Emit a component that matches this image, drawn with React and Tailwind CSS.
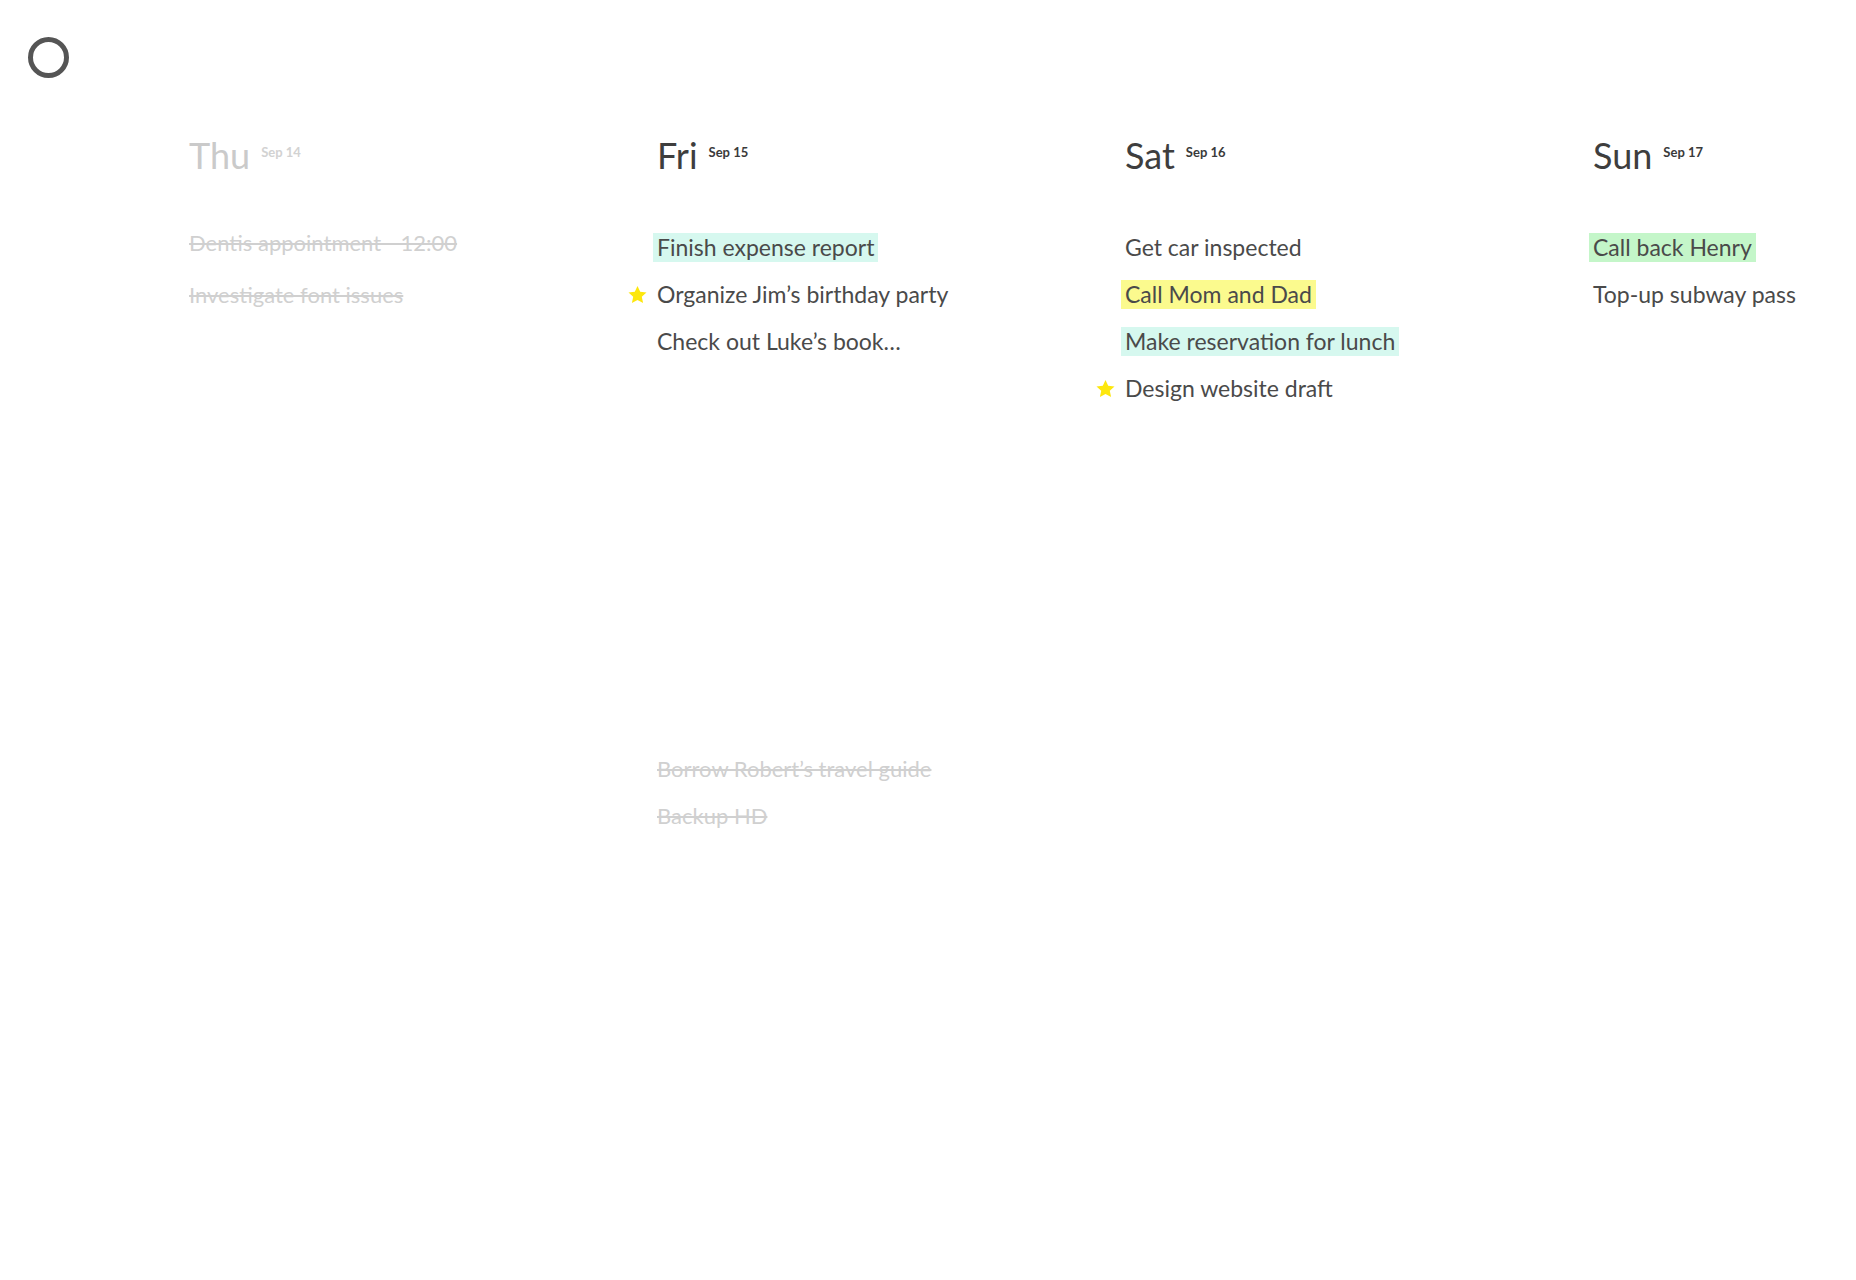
import React from "react";

const Star = () => (
  <svg viewBox="0 0 24 24" className="absolute left-[-30px] top-1/2 -translate-y-1/2 w-[21px] h-[21px]">
    <path d="M12 1.8l3.1 6.6 7.2.8-5.4 4.9 1.5 7.1L12 17.6l-6.4 3.6 1.5-7.1-5.4-4.9 7.2-.8z" fill="#fde70e" />
  </svg>
);

function Task({ t }) {
  const hl = {
    mint: "bg-[#d6f8ef] -ml-[4px] px-[4px]",
    yellow: "bg-[#fbfa8e] -ml-[4px] px-[4px]",
    green: "bg-[#c4f6c9] -ml-[4px] px-[4px]",
  };
  return (
    <div className="h-[47px] flex items-center">
      <span
        className={
          "relative leading-[29px] whitespace-nowrap " +
          (t.done ? "text-[#d0d0d0] line-through text-[22px] " : "text-[#4a4a4a] ") +
          (t.hl ? hl[t.hl] : "") +
          (t.lift ? " -translate-y-[5px]" : "")
        }
      >
        {t.star && <Star />}
        {t.text}
      </span>
    </div>
  );
}

const days = [
  {
    day: "Thu",
    date: "Sep 14",
    past: true,
    tasks: [
      { text: "Dentis appointment - 12:00", done: true, lift: true },
      { text: "Investigate font issues", done: true },
    ],
  },
  {
    day: "Fri",
    date: "Sep 15",
    tasks: [
      { text: "Finish expense report", hl: "mint" },
      { text: "Organize Jim’s birthday party", star: true },
      { text: "Check out Luke’s book…" },
    ],
    later: [
      { text: "Borrow Robert’s travel guide", done: true },
      { text: "Backup HD", done: true },
    ],
  },
  {
    day: "Sat",
    date: "Sep 16",
    tasks: [
      { text: "Get car inspected" },
      { text: "Call Mom and Dad", hl: "yellow" },
      { text: "Make reservation for lunch", hl: "mint" },
      { text: "Design website draft", star: true },
    ],
  },
  {
    day: "Sun",
    date: "Sep 17",
    tasks: [
      { text: "Call back Henry", hl: "green" },
      { text: "Top-up subway pass" },
    ],
  },
];

export default function App() {
  return (
    <div
      className="w-[1856px] h-[1280px] bg-white overflow-hidden"
      style={{ fontFamily: "Lato, 'Open Sans', sans-serif" }}
    >
      <div className="pt-[37px] pl-[28px]">
        <div className="w-[41px] h-[41px] rounded-full border-[5px] border-[#555555]" />
      </div>
      <div className="grid grid-cols-[468px_468px_468px_468px] pl-[189px] mt-[52px]">
        {days.map((d) => (
          <div key={d.day} className="flex flex-col">
            <div className="flex items-start h-[48px]">
              <span
                className={
                  "text-[36px] leading-[50px] " +
                  (d.past ? "text-[#cacaca]" : "text-[#3e3e3e]")
                }
              >
                {d.day}
              </span>
              <span
                className={
                  "ml-[11px] mt-[12px] text-[13px] font-bold leading-[20px] " +
                  (d.past ? "text-[#d2d2d2]" : "text-[#3a3a3a]")
                }
              >
                {d.date}
              </span>
            </div>
            <div className="mt-[46px] text-[23px]">
              {d.tasks.map((t) => (
                <Task key={t.text} t={t} />
              ))}
            </div>
            {d.later && (
              <div className="mt-[380px] text-[23px]">
                {d.later.map((t) => (
                  <Task key={t.text} t={t} />
                ))}
              </div>
            )}
          </div>
        ))}
      </div>
    </div>
  );
}
